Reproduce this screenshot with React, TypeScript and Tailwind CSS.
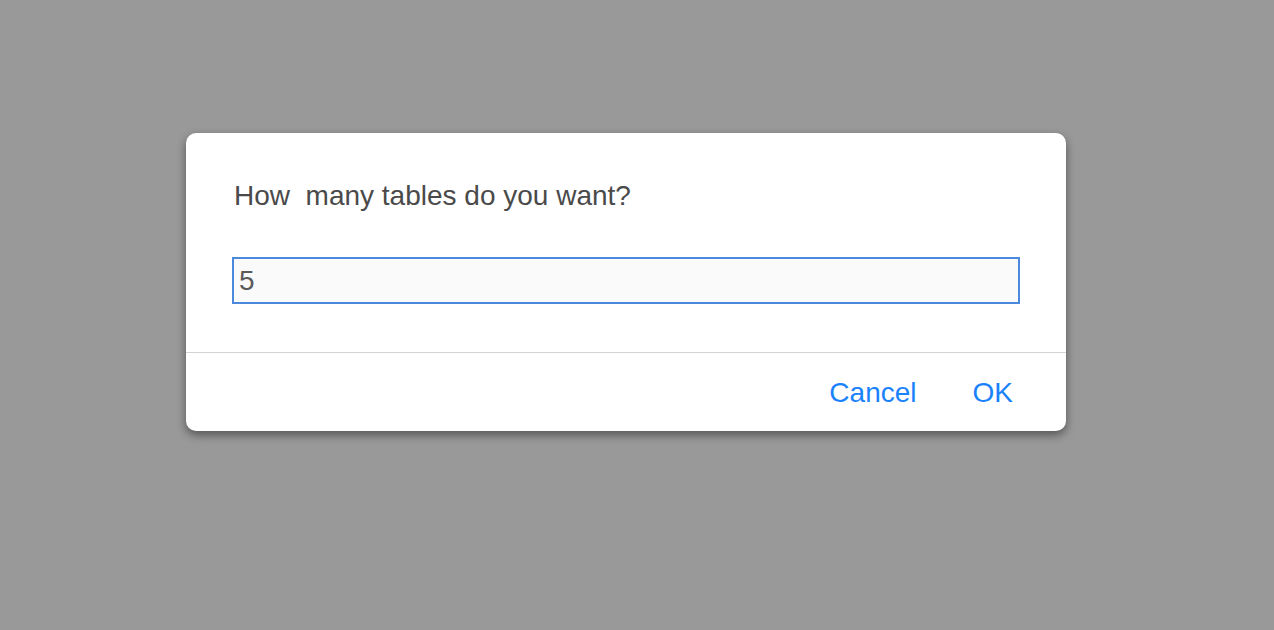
import React from "react";

const App: React.FC = () => {
  return (
    <div className="w-[1274px] h-[630px] bg-[#999999] pt-[133px] pl-[186px] font-['Liberation_Sans',Arial,sans-serif]">
      {/* Prompt dialog */}
      <div className="w-[880px] h-[298px] bg-white rounded-[10px] shadow-[0_4px_10px_rgba(0,0,0,0.45)] flex flex-col">
        <div className="px-[46px] pt-[47px] h-[220px] border-b border-[#d3d3d3]">
          <p className="text-[28px] leading-[32px] text-[#4a4a4a] pl-[2px] whitespace-pre">
            How  many tables do you want?
          </p>
          <div className="mt-[45px] h-[47px] border-2 border-[#4a89dc] bg-[#fafafa] flex items-center px-[5px]">
            <span className="text-[28px] leading-[32px] text-[#5a5a5a]">5</span>
          </div>
        </div>
        <div className="flex-1 flex items-center justify-end pr-[53px] gap-[56px] pt-[2px]">
          <button className="text-[28px] leading-[32px] text-[#1a82fb]">Cancel</button>
          <button className="text-[28px] leading-[32px] text-[#1a82fb] font-medium">OK</button>
        </div>
      </div>
    </div>
  );
};

export default App;
